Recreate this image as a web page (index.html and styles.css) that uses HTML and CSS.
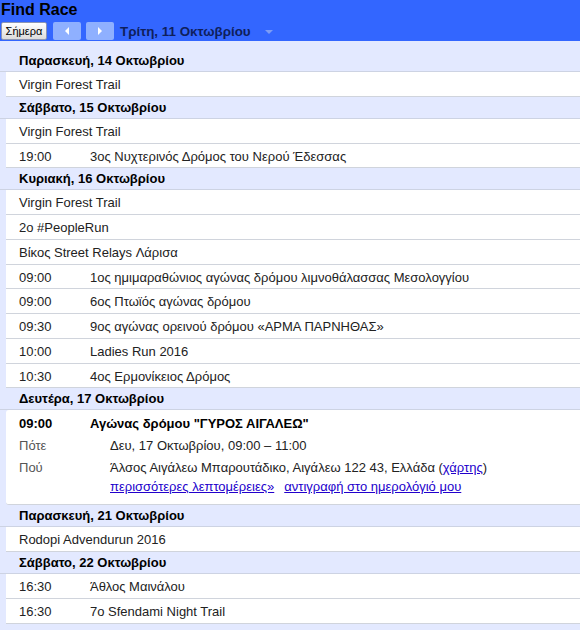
FILE: index.html
```html
<!DOCTYPE html>
<html>
<head>
  <title>Find Race</title>
  <link rel="stylesheet" href="styles.css">
</head>
<body>
  <div class="header">
    <div class="cal-title">Find Race</div>
    <div class="toolbar">
      <button class="today-btn">Σήμερα</button>
      <button class="nav-btn"><span class="arrow-left"></span></button>
      <button class="nav-btn"><span class="arrow-right"></span></button>
      <div class="date-label">Τρίτη, 11 Οκτωβρίου</div>
      <span class="dropdown"></span>
    </div>
  </div>

  <div class="agenda">
    <div class="day-head">Παρασκευή, 14 Οκτωβρίου</div>
    <div class="event"><span class="title">Virgin Forest Trail</span></div>

    <div class="day-head">Σάββατο, 15 Οκτωβρίου</div>
    <div class="event"><span class="title">Virgin Forest Trail</span></div>
    <div class="event"><span class="time">19:00</span><span class="title">3ος Νυχτερινός Δρόμος του Νερού Έδεσσας</span></div>

    <div class="day-head">Κυριακή, 16 Οκτωβρίου</div>
    <div class="event"><span class="title">Virgin Forest Trail</span></div>
    <div class="event"><span class="title">2ο #PeopleRun</span></div>
    <div class="event"><span class="title">Βίκος Street Relays Λάρισα</span></div>
    <div class="event"><span class="time">09:00</span><span class="title">1ος ημιμαραθώνιος αγώνας δρόμου λιμνοθάλασσας Μεσολογγίου</span></div>
    <div class="event"><span class="time">09:00</span><span class="title">6ος Πτωϊός αγώνας δρόμου</span></div>
    <div class="event"><span class="time">09:30</span><span class="title">9ος αγώνας ορεινού δρόμου «ΑΡΜΑ ΠΑΡΝΗΘΑΣ»</span></div>
    <div class="event"><span class="time">10:00</span><span class="title">Ladies Run 2016</span></div>
    <div class="event"><span class="time">10:30</span><span class="title">4ος Ερμονίκειος Δρόμος</span></div>

    <div class="day-head">Δευτέρα, 17 Οκτωβρίου</div>
    <div class="event-open">
      <div class="event-row bold"><span class="time">09:00</span><span class="title">Αγώνας δρόμου "ΓΥΡΟΣ ΑΙΓΑΛΕΩ"</span></div>
      <div class="detail-row"><span class="label">Πότε</span><span>Δευ, 17 Οκτωβρίου, 09:00 – 11:00</span></div>
      <div class="detail-row"><span class="label">Πού</span><span>Άλσος Αιγάλεω Μπαρουτάδικο, Αιγάλεω 122 43, Ελλάδα (<a href="#">χάρτης</a>)</span></div>
      <div class="detail-links"><a href="#">περισσότερες λεπτομέρειες»</a><a href="#">αντιγραφή στο ημερολόγιό μου</a></div>
    </div>

    <div class="day-head">Παρασκευή, 21 Οκτωβρίου</div>
    <div class="event"><span class="title">Rodopi Advendurun 2016</span></div>

    <div class="day-head">Σάββατο, 22 Οκτωβρίου</div>
    <div class="event"><span class="time">16:30</span><span class="title">Άθλος Μαινάλου</span></div>
    <div class="event"><span class="time">16:30</span><span class="title">7ο Sfendami Night Trail</span></div>
  </div>
</body>
</html>
```

FILE: styles.css
```css
:root {
  --blue: #3366ff;
  --pale: #e3e9ff;
  --line: #d0d4dc;
  --link: #2200cc;
}

* {
  box-sizing: border-box;
}

body {
  margin: 0;
  width: 580px;
  height: 630px;
  overflow: hidden;
  background: var(--pale);
  font-family: "Liberation Sans", Arial, sans-serif;
  font-size: 13px;
  color: #222;
}

.header {
  background: var(--blue);
  height: 41px;
  padding: 0 1px;
}

.cal-title {
  font-size: 16px;
  font-weight: 700;
  color: #000;
  line-height: 19px;
}

.toolbar {
  display: flex;
  align-items: center;
  height: 20px;
  margin-top: 2px;
}

.today-btn {
  width: 46px;
  height: 18px;
  padding: 0;
  border: 1px solid #8c96b4;
  border-radius: 2px;
  background: linear-gradient(#ffffff, #dcdcdc);
  font-family: "Liberation Sans", Arial, sans-serif;
  font-size: 11px;
  color: #000;
}

.nav-btn {
  width: 28px;
  height: 18px;
  margin-left: 6px;
  padding: 0;
  border: none;
  border-radius: 2px;
  background: #8fb0ff;
  display: flex;
  align-items: center;
  justify-content: center;
}

.nav-btn + .nav-btn {
  margin-left: 5px;
}

.arrow-left,
.arrow-right {
  width: 0;
  height: 0;
  border-top: 4px solid transparent;
  border-bottom: 4px solid transparent;
}

.arrow-left {
  border-right: 4px solid #fff;
}

.arrow-right {
  border-left: 4px solid #fff;
}

.date-label {
  margin-left: 6px;
  font-size: 13.4px;
  font-weight: 700;
  color: #0f1f5c;
}

.dropdown {
  margin-left: 14px;
  margin-top: 2px;
  width: 0;
  height: 0;
  border-left: 4px solid transparent;
  border-right: 4px solid transparent;
  border-top: 4px solid #7d9cf5;
}

.agenda {
  padding-top: 9px;
}

.day-head {
  height: 22px;
  line-height: 22px;
  padding-left: 19px;
  font-weight: 700;
  color: #000;
  border-bottom: 1px solid #cdd3e3;
}

.event {
  display: flex;
  height: 24.75px;
  line-height: 26px;
  margin-left: 6px;
  padding-left: 13px;
  background: #fff;
  border-bottom: 1px solid var(--line);
  white-space: nowrap;
}

.time {
  width: 71px;
  flex: none;
}

.event-open {
  height: 95px;
  margin-left: 6px;
  padding: 3px 0 0 13px;
  background: #fff;
  border-bottom: 1px solid var(--line);
  border-radius: 3px 0 0 3px;
}

.event-row {
  display: flex;
  line-height: 22px;
}

.event-row.bold {
  font-weight: 700;
  color: #000;
}

.detail-row {
  display: flex;
  line-height: 22px;
}

.label {
  width: 91px;
  flex: none;
  color: #555;
}

.detail-links {
  display: flex;
  gap: 10px;
  padding-left: 91px;
  line-height: 16px;
}

a {
  color: var(--link);
}
```
